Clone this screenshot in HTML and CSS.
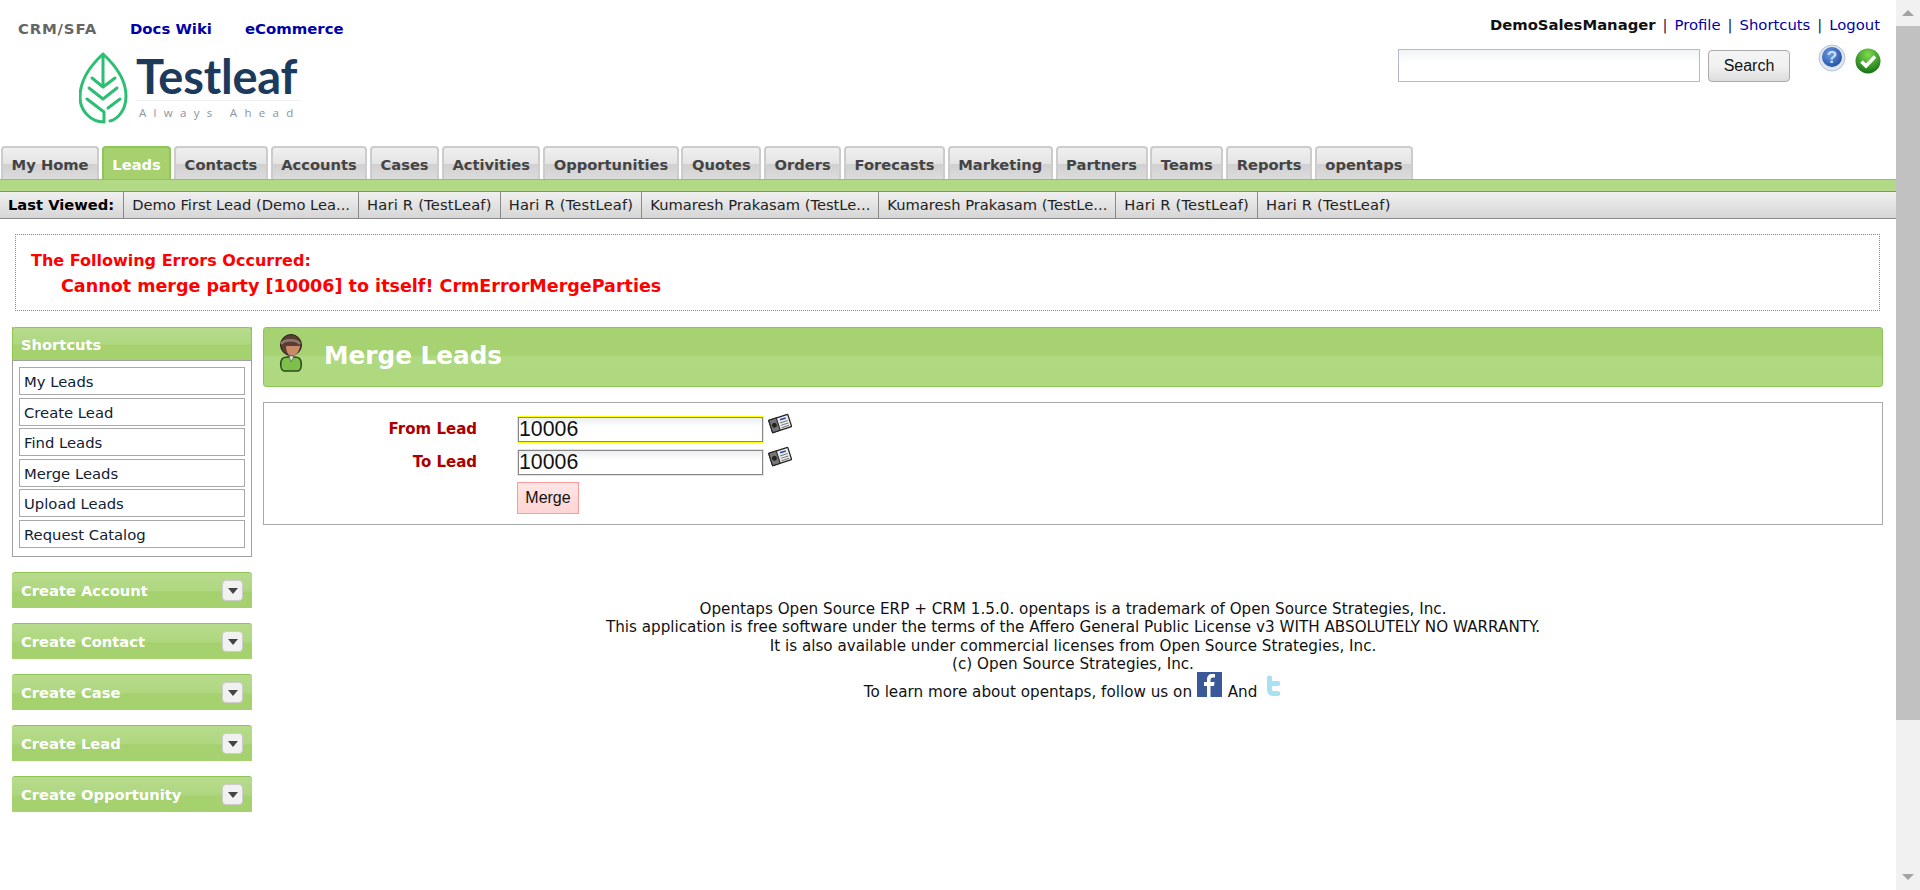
FILE: index.html
```html
<!DOCTYPE html>
<html lang="en">
<head>
<meta charset="utf-8">
<title>Merge Leads | opentaps CRM</title>
<link rel="stylesheet" href="styles.css">
</head>
<body>
<div class="page">
  <header class="top">
    <div class="top-left">
      <nav class="apps"><span class="app-current">CRM/SFA</span><a class="app">Docs Wiki</a><a class="app">eCommerce</a></nav>
      <div class="logo">
        <svg class="leaf" viewBox="0 0 50 72" width="50" height="72" fill="none" stroke="#2cbf73" stroke-width="3" stroke-linecap="round" stroke-linejoin="round">
          <path d="M24 33V2C36 13 47 28 47 44C47 58 39 67 31 69M24 2C12 13 1 28 1 45C1 59 12 70 25 70V60L8 47"/>
          <path d="M13 26L24 35L36 26M10 36L24 47L38 36M29 56L41 47"/>
        </svg>
        <div class="logo-text">
          <div class="logo-name">Testleaf</div>
          <div class="logo-tag">Always Ahead</div>
        </div>
      </div>
    </div>
    <div class="top-right">
      <div class="user-line"><b class="user-name">DemoSalesManager</b><span class="sep">|</span><a class="ulink">Profile</a><span class="sep">|</span><a class="ulink">Shortcuts</a><span class="sep">|</span><a class="ulink">Logout</a></div>
      <div class="search-row">
        <input class="search-input" type="text" aria-label="Search">
        <button class="search-btn" type="button">Search</button>
        <svg class="ico-help" viewBox="0 0 28 28" width="28" height="28">
          <defs><radialGradient id="hb" cx="40%" cy="35%" r="70%"><stop offset="0" stop-color="#6f9be0"/><stop offset="1" stop-color="#1f4ea8"/></radialGradient></defs>
          <circle cx="14" cy="14" r="13" fill="#dfe6ef" stroke="#b9c4d2"/>
          <circle cx="14" cy="13" r="10" fill="url(#hb)"/>
          <text x="14" y="19" text-anchor="middle" class="ico-q">?</text>
        </svg>
        <svg class="ico-ok" viewBox="0 0 26 26" width="26" height="26">
          <defs><radialGradient id="gb" cx="50%" cy="25%" r="80%"><stop offset="0" stop-color="#7fdc4c"/><stop offset="1" stop-color="#0d6a12"/></radialGradient></defs>
          <circle cx="13" cy="13" r="12.5" fill="url(#gb)"/>
          <path d="M6.5 13.5L11 18L20 8.5" fill="none" stroke="#fff" stroke-width="3.6"/>
        </svg>
      </div>
    </div>
  </header>

  <nav class="tabs">
    <a class="tab">My Home</a><a class="tab tab-on">Leads</a><a class="tab">Contacts</a><a class="tab">Accounts</a><a class="tab">Cases</a><a class="tab">Activities</a><a class="tab">Opportunities</a><a class="tab">Quotes</a><a class="tab">Orders</a><a class="tab">Forecasts</a><a class="tab">Marketing</a><a class="tab">Partners</a><a class="tab">Teams</a><a class="tab">Reports</a><a class="tab">opentaps</a>
  </nav>
  <div class="green-bar"></div>
  <div class="viewed">
    <b class="viewed-label">Last Viewed:</b><a class="viewed-item">Demo First Lead (Demo Lea...</a><a class="viewed-item viewed-short">Hari R (TestLeaf)</a><a class="viewed-item viewed-short">Hari R (TestLeaf)</a><a class="viewed-item">Kumaresh Prakasam (TestLe...</a><a class="viewed-item">Kumaresh Prakasam (TestLe...</a><a class="viewed-item viewed-short">Hari R (TestLeaf)</a><a class="viewed-item viewed-short viewed-last">Hari R (TestLeaf)</a>
  </div>

  <section class="errors">
    <div class="err-head">The Following Errors Occurred:</div>
    <div class="err-msg">Cannot merge party [10006] to itself! CrmErrorMergeParties</div>
  </section>

  <div class="columns">
    <aside class="side">
      <div class="panel">
        <div class="panel-head">Shortcuts</div>
        <ul class="short-list">
          <li class="short">My Leads</li>
          <li class="short">Create Lead</li>
          <li class="short">Find Leads</li>
          <li class="short">Merge Leads</li>
          <li class="short">Upload Leads</li>
          <li class="short">Request Catalog</li>
        </ul>
      </div>
      <div class="collapsed"><span>Create Account</span><i class="drop"></i></div>
      <div class="collapsed"><span>Create Contact</span><i class="drop"></i></div>
      <div class="collapsed"><span>Create Case</span><i class="drop"></i></div>
      <div class="collapsed"><span>Create Lead</span><i class="drop"></i></div>
      <div class="collapsed"><span>Create Opportunity</span><i class="drop"></i></div>
    </aside>
    <main class="main">
      <div class="title-bar">
        <svg class="person" viewBox="0 0 24 38" width="24" height="38">
          <path d="M5 37C1 36 1 28 3 25C5 22 19 22 21 25C23 28 23 36 19 37Z" fill="#7cc04b" stroke="#2f4a1d" stroke-width="1.5"/>
          <circle cx="12" cy="11" r="10.500" fill="#5b3d34" stroke="#2b211d"/>
          <path d="M7 12H21C20 18 17 22 13 22C9 22 7 17 7 12Z" fill="#c98a66"/>
          <path d="M2 10C6 5 17 5 21 10" fill="none" stroke="#8d7a70" stroke-width="2.500"/>
          <path d="M10 22L12 28L15 22Z" fill="#e8e8e8" stroke="#333" stroke-width=".5"/>
        </svg>
        <h1 class="title">Merge Leads</h1>
      </div>
      <form class="form-box">
        <div class="form-row">
          <label class="form-label">From Lead</label>
          <input class="lead-input" type="text" value="10006">
          <svg class="book" viewBox="0 0 24 22" width="24" height="22"><g transform="rotate(-18 12 11)"><rect x="2" y="5" width="20" height="13" rx="1" fill="#eee" stroke="#222" stroke-width="1.3"/><rect x="2" y="5" width="8" height="13" fill="#777" stroke="#222"/><circle cx="6" cy="11.5" r="2.4" fill="#222"/><path d="M13 8h6" stroke="#2a49b8" stroke-width="1.6"/><path d="M12 11h8M12 13.500h8M12 16h8" stroke="#777"/></g></svg>
        </div>
        <div class="form-row">
          <label class="form-label">To Lead</label>
          <input class="lead-input" type="text" value="10006">
          <svg class="book" viewBox="0 0 24 22" width="24" height="22"><g transform="rotate(-18 12 11)"><rect x="2" y="5" width="20" height="13" rx="1" fill="#eee" stroke="#222" stroke-width="1.3"/><rect x="2" y="5" width="8" height="13" fill="#777" stroke="#222"/><circle cx="6" cy="11.5" r="2.4" fill="#222"/><path d="M13 8h6" stroke="#2a49b8" stroke-width="1.6"/><path d="M12 11h8M12 13.500h8M12 16h8" stroke="#777"/></g></svg>
        </div>
        <div class="form-row form-action">
          <button class="merge-btn" type="button">Merge</button>
        </div>
      </form>
      <footer class="foot">
        <div>Opentaps Open Source ERP + CRM 1.5.0. opentaps is a trademark of Open Source Strategies, Inc.</div>
        <div>This application is free software under the terms of the Affero General Public License v3 WITH ABSOLUTELY NO WARRANTY.</div>
        <div>It is also available under commercial licenses from Open Source Strategies, Inc.</div>
        <div>(c) Open Source Strategies, Inc.</div>
        <div class="follow">To learn more about opentaps, follow us on
          <svg class="fb" viewBox="0 0 25 25" width="25" height="25"><rect width="25" height="25" fill="#3b5998"/><path d="M13.500 25V14H17L17.500 10H13.500V8C13.500 6.500 14 5.500 16 5.500H18V2C17 2 16 2 15 2C12 2 10 4 10 7.500V10H7V14H10V25Z" fill="#fff"/></svg>
          And
          <svg class="tw" viewBox="0 0 18 22" width="18" height="22"><path d="M3 2C3 0 8 0 8 2V6H14C17 6 17 11 14 11H8V14C8 16 9 16 11 16H14C17 16 17 21 14 21H9C5 21 3 18 3 14Z" fill="#a9e0f3"/></svg>
        </div>
      </footer>
    </main>
  </div>
</div>
<div class="scrollbar">
  <div class="sb-up"></div>
  <div class="sb-thumb"></div>
  <div class="sb-down"></div>
</div>
</body>
</html>
```
FILE: styles.css
```css
* { box-sizing: border-box; }
html, body { margin: 0; height: 100%; overflow: hidden; background: #fff; }
body { font-family: "DejaVu Sans", Verdana, sans-serif; font-size: 13.3px; color: #111; }
.page { width: 1896px; }
a { color: inherit; text-decoration: none; }

/* header */
.top { height: 146px; display: flex; justify-content: space-between; }
.top-left { padding: 21px 0 0 18px; }
.apps { display: flex; gap: 33px; font-weight: bold; font-size: 14.9px; line-height: 17px; }
.app-current { color: #666; letter-spacing: .8px; }
.app { color: #00a; }
.logo { display: flex; margin: 14px 0 0 61px; }
.leaf { flex: none; }
.logo-text { margin: 3px 0 0 7px; }
.logo-name { font-family: Lato, sans-serif; font-weight: 700; font-size: 47px; line-height: 42px; color: #1b3a5c; letter-spacing: -.2px; }
.logo-tag { margin-top: 3px; padding: 5px 0 0 3px; border-top: 1px solid #eef1f3; font-family: "Open Sans", sans-serif; font-size: 11.5px; line-height: 13px; letter-spacing: 7.3px; color: #8a94a3; white-space: nowrap; width: 164px; }

.top-right { padding: 16px 15px 0 0; display: flex; flex-direction: column; align-items: flex-end; }
.user-line { display: flex; margin-right: 1px; font-size: 14.8px; line-height: 18px; }
.user-name { font-weight: bold; }
.sep { margin: 0 7px; color: #124; }
.ulink { color: #00a; }
.search-row { display: flex; margin-top: 14px; align-items: flex-start; }
.search-input { width: 302px; height: 33px; margin: 1px 0 0; border: 1px solid #b5b8cf; background: linear-gradient(#f0f3f5, #fff 40%); }
.search-btn { width: 82px; height: 32px; margin: 2px 0 0 8px; padding: 0; border: 1px solid #aaa; border-radius: 4px; background: linear-gradient(#f4f4f4, #f1f1f1 50%, #ddd); font: 16px "Liberation Sans", Arial, sans-serif; color: #111; }
.ico-help { margin: -4px 0 0 28px; }
.ico-ok { margin: 0 0 0 9px; }
.ico-q { font: bold 17px "Liberation Sans", sans-serif; fill: #cfe0ff; }

/* tabs */
.tabs { display: flex; gap: 2.6px; height: 33px; padding-left: 1px; align-items: stretch; }
.tab { padding: 8px 8.6px 0; border: 2px solid #ccc; border-bottom: 0; border-radius: 4px 4px 0 0; background: linear-gradient(#f0f0f0, #e4e4e4 50%, #d0d0d0 52%, #dcdcdc); font-weight: bold; font-size: 14.7px; line-height: 18px; color: #444; white-space: nowrap; }
.tab-on { background: #a6d16e; border-color: #8fc65a; color: #fff; }
.green-bar { height: 12px; background: #b2d985; border-top: 1px solid #8fc65a; }
.viewed { display: flex; height: 28px; border-top: 1px solid #8a8a8a; border-bottom: 1px solid #8a8a8a; background: linear-gradient(#f0f0f0, #d6d6d6); font-size: 14.7px; line-height: 26px; }
.viewed-label { padding: 0 9px 0 8px; font-weight: bold; border-right: 1px solid #8a8a8a; color: #000; }
.viewed-item { padding: 0 8px; border-right: 1px solid #8a8a8a; color: #222; white-space: nowrap; }
.viewed-short { letter-spacing: .2px; }
.viewed-last { border-right: 0; }

/* errors */
.errors { height: 77px; margin: 15px 16px 0 15px; padding: 14px 15px 0; border: 1px dotted #888; color: #f00; font-weight: bold; }
.err-head { font-size: 16px; line-height: 23px; }
.err-msg { margin-left: 30px; font-size: 17.55px; line-height: 28px; }

/* columns */
.columns { display: flex; gap: 11px; margin: 16px 13px 0 12px; }
.side { flex: none; width: 240px; }
.panel { border: 1px solid #a0a0a0; border-top: 0; height: 230px; }
.panel-head { height: 34px; margin: 0 -1px; padding-left: 8px; border: 1px solid #90c456; border-bottom: 1px solid #a0a0a0; border-radius: 3px 3px 0 0; background: linear-gradient(#b7db8c, #afd780 50%, #a6d16f 54%); color: #fff; font-weight: bold; font-size: 14.7px; line-height: 33px; }
.short-list { list-style: none; margin: 6px 6px 0; padding: 0; display: flex; flex-direction: column; gap: 2.6px; }
.short { height: 28px; padding-left: 4px; border: 1px solid #a8a8a8; font-size: 14.8px; line-height: 28px; color: #123; }
.collapsed { height: 36px; margin-top: 15px; padding: 0 9px; display: flex; justify-content: space-between; align-items: center; border-top: 1px solid #90c456; border-radius: 3px 3px 0 0; background: linear-gradient(#b7db8c, #afd780 50%, #a6d16f 54%); color: #fff; font-weight: bold; font-size: 14.7px; }
.drop { width: 21px; height: 21px; display: flex; align-items: center; justify-content: center; border: 1px solid #ccc; border-radius: 4px; background: #f1f1f1; }
.drop::after { content: ""; border: 5px solid transparent; border-top: 6px solid #444; border-bottom: 0; }

/* main */
.main { flex: 1; min-width: 0; }
.title-bar { height: 60px; display: flex; align-items: flex-start; border: 1px solid #90c456; border-radius: 3px; background: linear-gradient(#a6d272, #a6d272 46%, #b0d981 50%, #aed97f); padding: 6px 0 0 15px; }
.person { flex: none; }
.title { margin: 6px 0 0 21px; font-size: 24.7px; line-height: 32px; color: #fff; font-weight: bold; }
.form-box { height: 123px; margin-top: 15px; padding-top: 13px; border: 1px solid #a8a8a8; }
.form-row { display: flex; align-items: flex-start; height: 33px; }
.form-label { width: 213px; text-align: right; padding-top: 4px; font-weight: bold; font-size: 15px; line-height: 18px; color: #a00; }
.lead-input { width: 247px; height: 27px; margin-left: 40px; padding: 0 1px; border: 1px solid #ff0; box-shadow: inset 0 0 0 1px #888; background: linear-gradient(#e9eced, #fff 40%); font: 21.3px "Liberation Sans", Arial, sans-serif; color: #111; }
.book { margin: -4px 0 0 4px; }
.form-action { padding-left: 253px; }
.merge-btn { width: 62px; height: 32px; padding: 0; border: 1px solid #ff9a9a; background: linear-gradient(#ffe6e6, #ffdcdc 50%, #ffd5d5); font: 16px "Liberation Sans", Arial, sans-serif; color: #111; }
.foot { margin-top: 75px; text-align: center; font-size: 15.2px; line-height: 18.3px; color: #111; }
.follow { line-height: 22px; margin-top: -1px; }
.fb { vertical-align: 0; margin-right: 1px; }
.tw { vertical-align: 0; margin-left: 2px; }

/* scrollbar */
.scrollbar { position: fixed; top: 0; right: 0; bottom: 0; width: 24px; background: #f1f1f1; display: flex; flex-direction: column; align-items: center; }
.sb-up, .sb-down { flex: none; width: 100%; height: 26px; display: flex; align-items: center; justify-content: center; }
.sb-up::after { content: ""; border: 6px solid transparent; border-bottom: 6px solid #a3a3a3; border-top: 0; }
.sb-down::after { content: ""; border: 6px solid transparent; border-top: 6px solid #a3a3a3; border-bottom: 0; }
.sb-thumb { width: 100%; height: 694px; background: #c1c1c1; }
.sb-down { margin-top: auto; }
```
